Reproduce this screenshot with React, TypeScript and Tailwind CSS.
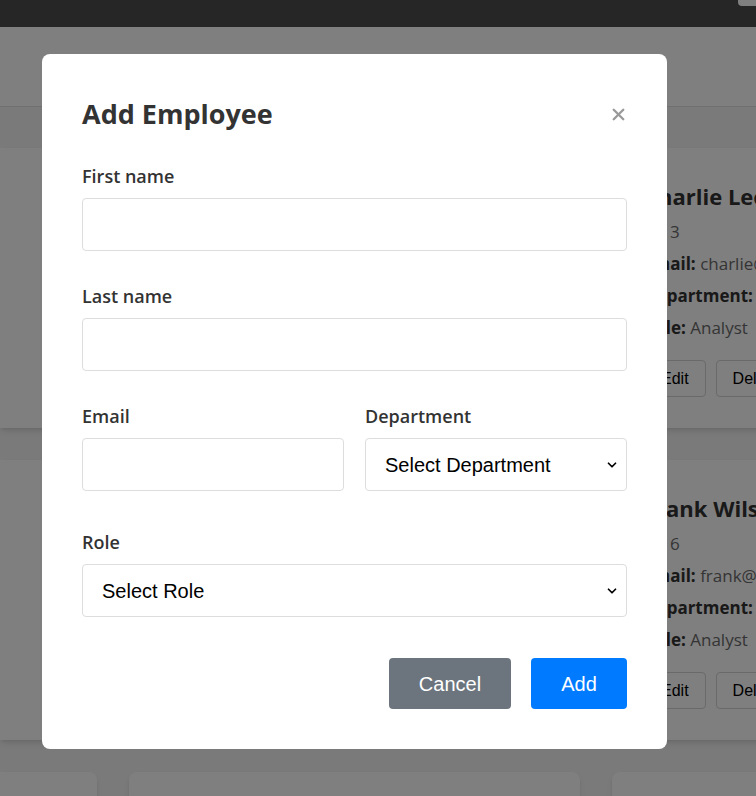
import { X, ChevronDown } from "lucide-react";

interface Employee {
  id: number;
  name: string;
  email: string;
  department: string;
  role: string;
}

const rows: (Employee | null)[][] = [
  [null, null, { id: 3, name: "Charlie Lee", email: "charlie@example.com", department: "Finance", role: "Analyst" }],
  [null, null, { id: 6, name: "Frank Wilson", email: "frank@example.com", department: "Finance", role: "Analyst" }],
  [null, null, null],
];

function EmployeeCard({ employee, first }: { employee: Employee | null; first?: boolean }) {
  return (
    <div
      className={`shrink-0 h-[280px] bg-white shadow-md p-8 rounded-lg ${first ? "w-[97px] rounded-l-none" : "w-[451px]"}`}
    >
      {employee && (
        <div className="text-[17px] text-[#333] [font-family:'Open_Sans',sans-serif]">
          <h3 className="text-[22px] font-bold text-[#333] leading-[32px] mb-[4px] whitespace-nowrap">{employee.name}</h3>
          <p className="leading-[32px] text-[#6a6a6a]">ID: {employee.id}</p>
          <p className="leading-[32px] text-[#6a6a6a] whitespace-nowrap"><strong className="text-[#333]">Email:</strong> {employee.email}</p>
          <p className="leading-[32px] text-[#6a6a6a] whitespace-nowrap"><strong className="text-[#333]">Department:</strong> {employee.department}</p>
          <p className="leading-[32px] text-[#6a6a6a]"><strong className="text-[#333]">Role:</strong> {employee.role}</p>
          <div className="flex gap-[10px] mt-[16px] [font-family:'Liberation_Sans',Arial,sans-serif]">
            <button className="h-[37px] px-4 border border-[#d4d4d4] rounded bg-white text-[16px] text-black">Edit</button>
            <button className="h-[37px] px-4 border border-[#d4d4d4] rounded bg-white text-[16px] text-black">Delete</button>
          </div>
        </div>
      )}
    </div>
  );
}

function Field({ label, children }: { label: string; children: React.ReactNode }) {
  return (
    <div className="flex flex-col flex-1 min-w-0">
      <label className="text-[18px] font-semibold text-[#333] leading-[27px] mb-2">{label}</label>
      {children}
    </div>
  );
}

function SelectBox({ placeholder }: { placeholder: string }) {
  return (
    <div className="relative">
      <select className="w-full h-[53px] appearance-none border border-[#ddd] rounded bg-white pl-[19px] pr-10 text-[20px] text-black [font-family:'Liberation_Sans',Arial,sans-serif] outline-none">
        <option>{placeholder}</option>
      </select>
      <ChevronDown size={14} strokeWidth={3} className="absolute right-[8px] top-[20px] text-black pointer-events-none" />
    </div>
  );
}

export default function App() {
  const inputCls = "w-full h-[53px] border border-[#ddd] rounded bg-white px-4 text-[18px] outline-none";

  return (
    <div className="relative w-[756px] h-[796px] overflow-hidden bg-[#f4f4f4] [font-family:'Open_Sans',sans-serif]">
      <div className="h-[27px] bg-[#4c4c4c] flex justify-end">
        <div className="w-[18px] h-[6px] bg-white rounded-bl" />
      </div>
      <div className="h-[80px] bg-white border-b border-[#e0e0e0]" />
      <div className="flex flex-col gap-8 pt-[41px]">
        {rows.map((row, i) => (
          <div key={i} className="flex gap-8">
            {row.map((emp, j) => (
              <EmployeeCard key={j} employee={emp} first={j === 0} />
            ))}
          </div>
        ))}
      </div>

      <div className="absolute inset-0 bg-black/50 pl-[42px] pt-[54px]">
        <div className="w-[625px] bg-white rounded-lg p-10">
          <div className="flex items-center justify-between mb-7 -mt-[1px]">
            <h2 className="text-[27px] font-bold text-[#333] leading-[42px]">Add Employee</h2>
            <X size={19} strokeWidth={3} className="text-[#999] -mr-[1px]" />
          </div>

          <div className="flex flex-col gap-8">
            <Field label="First name">
              <input className={inputCls} />
            </Field>
            <Field label="Last name">
              <input className={inputCls} />
            </Field>
            <div className="flex gap-[21px] mb-[6px]">
              <Field label="Email">
                <input className={inputCls} />
              </Field>
              <Field label="Department">
                <SelectBox placeholder="Select Department" />
              </Field>
            </div>
            <Field label="Role">
              <SelectBox placeholder="Select Role" />
            </Field>
          </div>

          <div className="flex justify-end gap-5 mt-[41px] [font-family:'Liberation_Sans',Arial,sans-serif]">
            <button className="w-[122px] h-[51px] rounded bg-[#6c757d] text-white text-[20px]">Cancel</button>
            <button className="w-[96px] h-[51px] rounded bg-[#007bff] text-white text-[20px]">Add</button>
          </div>
        </div>
      </div>
    </div>
  );
}
